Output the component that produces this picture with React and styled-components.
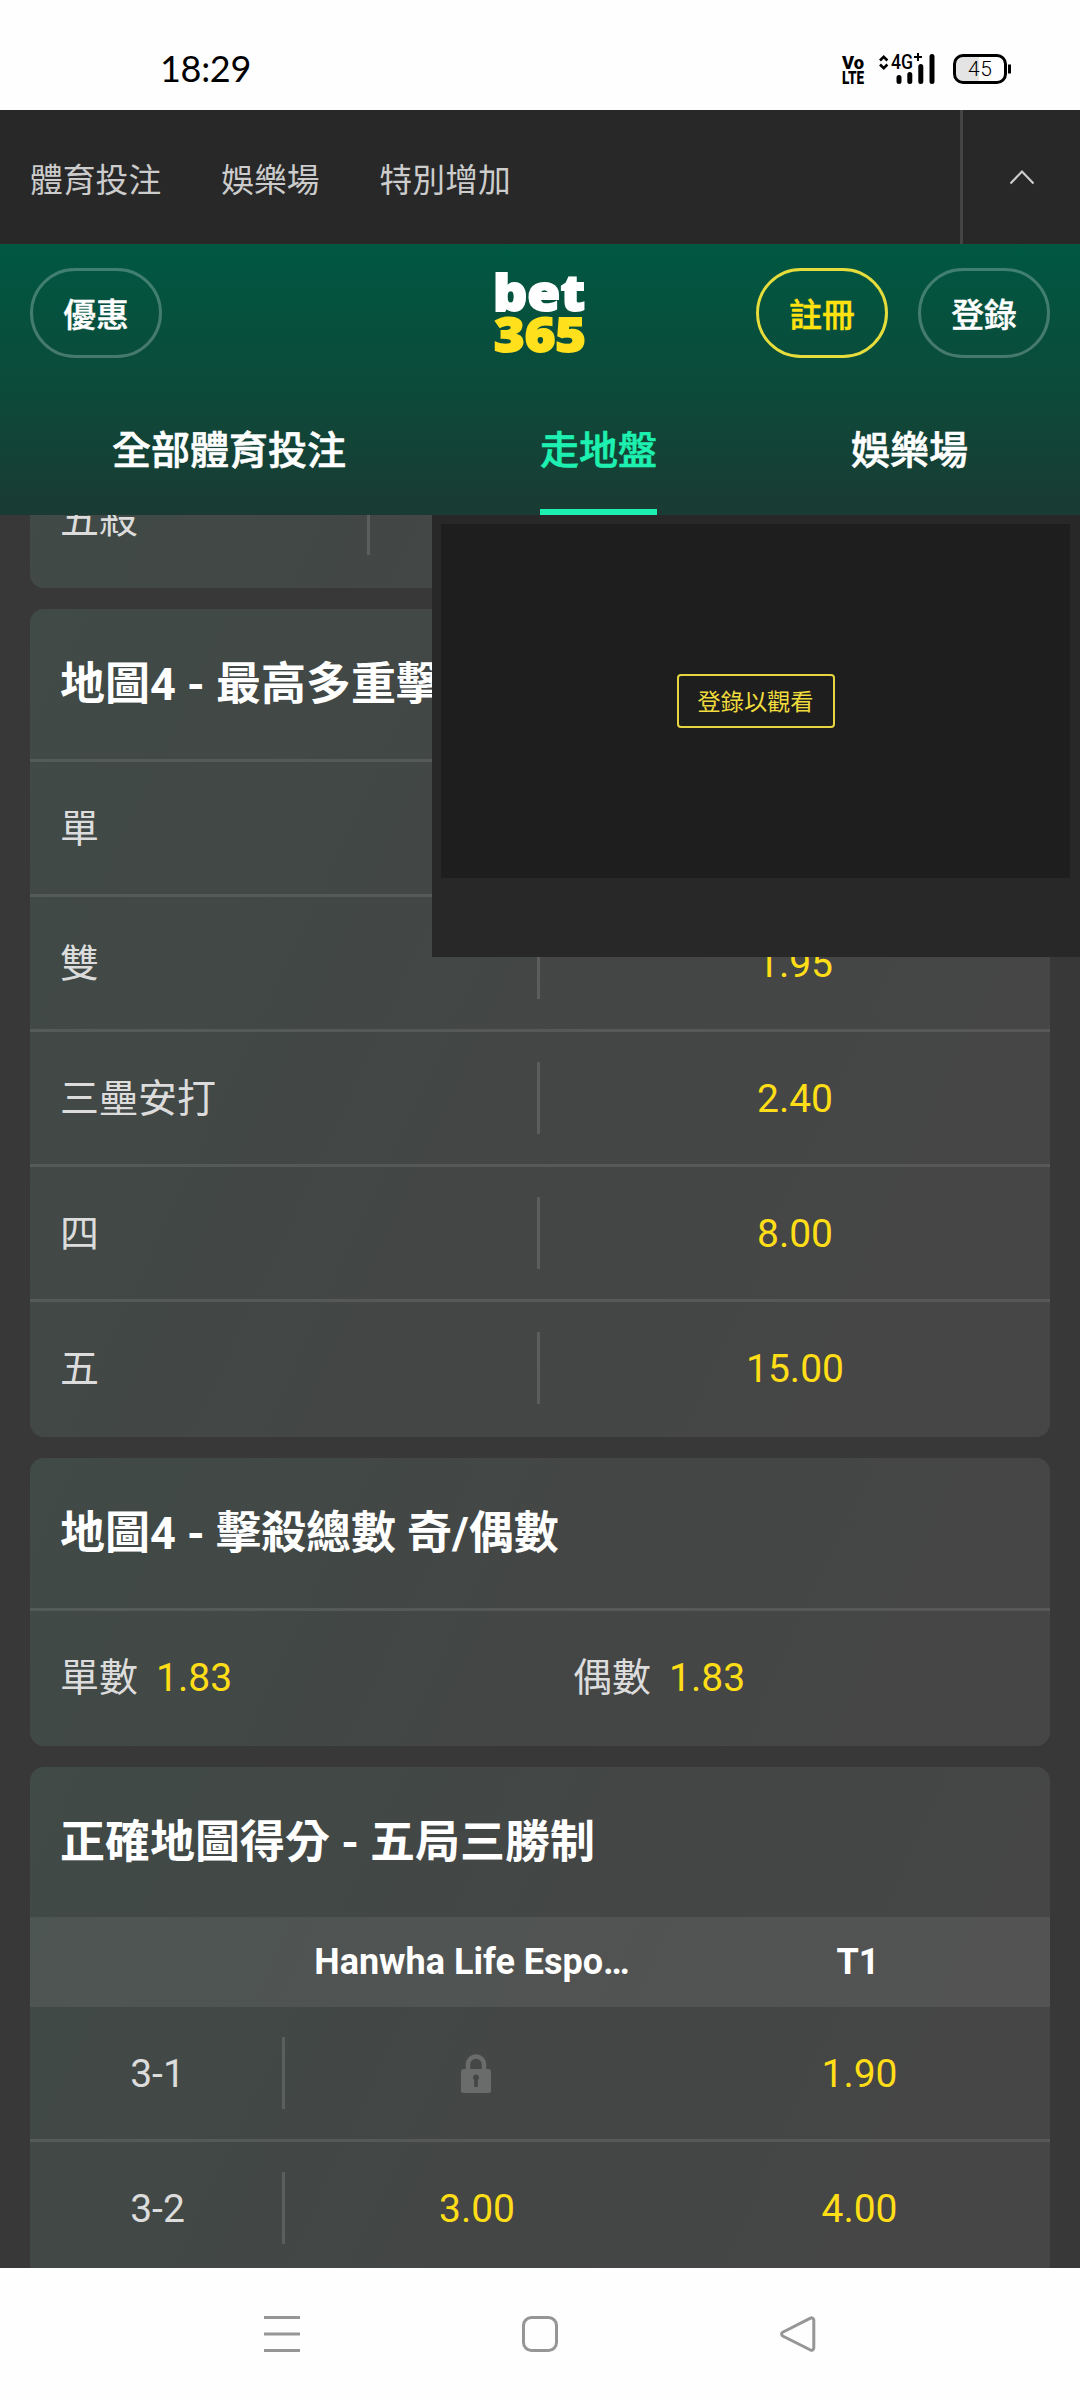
import React from "react";
import styled, { createGlobalStyle } from "styled-components";

const GlobalStyle = createGlobalStyle`
  * {
    box-sizing: border-box;
  }

  body {
    margin: 0;
    background: #383838;
    font-family: Roboto, "Noto Sans CJK TC", sans-serif;
  }
`;

const Screen = styled.div`
  width: 1080px;
  height: 2400px;
  display: flex;
  flex-direction: column;
  overflow: hidden;
`;

// STATUS BAR
const StatusBar = styled.div`
  flex: none;
  height: 110px;
  padding: 26px 66px 0 160px;
  display: flex;
  justify-content: space-between;
  background: #fefefe;
`;

const Clock = styled.div`
  font-family: Lato, sans-serif;
  font-size: 36px;
  line-height: 84px;
  height: 84px;
  letter-spacing: -0.3px;
  color: #000;
`;

const StatusIcons = styled.svg`
  width: 174px;
  height: 40px;
  margin-top: 23px;
  font-family: Roboto, sans-serif;
`;

// PRODUCT BAR
const ProductBar = styled.div`
  flex: none;
  height: 134px;
  display: flex;
  background: #282828;
`;

const Products = styled.div`
  flex: 1;
  padding: 0 30px;
  display: flex;
  align-items: center;
  gap: 60px;
`;

const Product = styled.span`
  font-size: 32.8px;
  color: #ccc;
`;

const CollapseButton = styled.div`
  width: 120px;
  display: flex;
  align-items: center;
  justify-content: center;
  border-left: 3px solid #444;
`;

// HEADER
const Header = styled.header`
  flex: none;
  height: 271px;
  display: flex;
  flex-direction: column;
  background: linear-gradient(180deg, #005842 0%, #0b4b3a 50%, #1a3b33 100%);
`;

const HeaderTop = styled.div`
  height: 138px;
  padding: 0 30px;
  display: grid;
  grid-template-columns: 1fr auto 1fr;
  align-items: center;
`;

const Logo = styled.svg`
  width: 100px;
  height: 116px;
  font-family: "Open Sans", "Noto Sans", sans-serif;
  font-weight: 800;
`;

const Actions = styled.div`
  display: flex;
  justify-content: ${(props) => props.$align};
  gap: 30px;
`;

const Pill = styled.div`
  width: 132px;
  height: 90px;
  display: flex;
  align-items: center;
  justify-content: center;
  padding-bottom: 1px;
  border: 3px solid
    ${(props) => (props.$primary ? "#e6dd3c" : "rgba(255, 255, 255, 0.25)")};
  border-radius: 45px;
  color: ${(props) => (props.$primary ? "#ffe210" : "#fff")};
  font-size: 32.8px;
  font-weight: 500;
  -webkit-text-stroke: 0.4px currentColor;
`;

const Tabs = styled.nav`
  flex: 1;
  padding: 0 15px;
  display: flex;
  justify-content: space-around;
`;

const Tab = styled.div`
  display: flex;
  align-items: center;
  padding-top: ${(props) => (props.$active ? "2px" : "0")};
  padding-bottom: ${(props) => (props.$active ? "0" : "4px")};
  border-bottom: ${(props) => (props.$active ? "6px solid #1df0b0" : "none")};
  color: ${(props) => (props.$active ? "#1df0b0" : "#fff")};
  font-size: 39px;
  font-weight: 500;
  -webkit-text-stroke: 0.6px currentColor;
`;

// MARKETS
const Content = styled.main`
  flex: 1;
  min-height: 0;
  position: relative;
  overflow: hidden;
  padding: 0 30px;
  background: #383838;
`;

// The list is scrolled so that the first card is half under the header
const MarketList = styled.div`
  margin-top: -65px;
  display: flex;
  flex-direction: column;
  gap: 21px;
`;

const Card = styled.section`
  border-radius: 14px;
  padding-bottom: 3px;
  background: linear-gradient(115deg, #404a46 0%, #444645 55%, #464646 100%);
`;

const CardTitle = styled.h2`
  margin: 0;
  height: 150px;
  padding: 0 30px 7px;
  display: flex;
  align-items: center;
  font-size: 45px;
  font-weight: 700;
  white-space: pre;
  color: #fff;
`;

const Row = styled.div`
  height: ${(props) => (props.$plain ? "132px" : "135px")};
  display: grid;
  grid-template-columns: ${(props) => props.$columns};
  align-items: center;
  border-top: ${(props) =>
    props.$plain ? "none" : "3px solid rgba(255, 255, 255, 0.1)"};
`;

const Label = styled.div`
  height: 72px;
  padding: ${(props) => (props.$center ? "1px 0 0 3px" : "0 0 6px 30px")};
  display: flex;
  align-items: center;
  justify-content: ${(props) => (props.$center ? "center" : "flex-start")};
  border-right: 3px solid rgba(255, 255, 255, 0.13);
  font-size: 39px;
  color: #dcdcdc;
`;

const Odds = styled.div`
  display: flex;
  justify-content: center;
  padding-top: 1px;
  font-size: 39px;
  color: #ffde18;
`;

const Selection = styled.div`
  display: flex;
  align-items: center;
  gap: 18px;
  padding-left: 30px;
`;

const SelectionName = styled.span`
  padding-bottom: 6px;
  font-size: 39px;
  color: #dcdcdc;
`;

const TeamHeader = styled.div`
  height: 90px;
  display: grid;
  grid-template-columns: 255px 384px 381px;
  align-items: center;
  background: rgba(255, 255, 255, 0.07);
`;

const Team = styled.div`
  padding-right: ${(props) => (props.$wide ? "10px" : "3px")};
  text-align: center;
  font-size: 36px;
  font-weight: 700;
  color: #fff;
`;

// STREAM OVERLAY
const Stream = styled.aside`
  position: absolute;
  top: 0;
  right: 0;
  width: 648px;
  height: 442px;
  padding: 9px 10px 79px 9px;
  display: flex;
  background: #282828;
`;

const StreamScreen = styled.div`
  flex: 1;
  display: flex;
  align-items: center;
  justify-content: center;
  background: #1e1e1e;
`;

const WatchButton = styled.div`
  width: 158px;
  height: 54px;
  padding-bottom: 3px;
  display: flex;
  align-items: center;
  justify-content: center;
  border: 2px solid #e6d53f;
  border-radius: 4px;
  font-size: 23.2px;
  color: #f0dc3c;
`;

// SYSTEM NAVIGATION
const SystemNav = styled.div`
  flex: none;
  height: 132px;
  padding: 0 264px;
  display: flex;
  align-items: center;
  justify-content: space-between;
  background: #fefefe;
`;

const NavIcon = styled.svg`
  width: 36px;
  height: 36px;
  fill: none;
  stroke: #969696;
  stroke-width: 3;
`;

const kills = [
  { name: "單", odds: "1.95" },
  { name: "雙", odds: "1.95" },
  { name: "三壘安打", odds: "2.40" },
  { name: "四", odds: "8.00" },
  { name: "五", odds: "15.00" },
];

const scores = [
  { name: "3-1", home: null, away: "1.90" },
  { name: "3-2", home: "3.00", away: "4.00" },
];

const Lock = () => (
  <svg width="34" height="40" viewBox="0 0 34 40">
    <path
      d="M8 17V10.500a8 8 0 0 1 16 0V17"
      fill="none"
      stroke="#6a6c6b"
      strokeWidth="4.500"
    />
    <path
      fillRule="evenodd"
      fill="#6a6c6b"
      d="M3.500 15h25a2.500 2.500 0 0 1 2.500 2.500v19a2.500 2.500 0 0 1-2.500 2.500H3.500a2.500 2.500 0 0 1-2.500-2.500v-19A2.500 2.500 0 0 1 3.500 15zM16 20.500a3 3 0 0 0-1.800 5.400V33h3.600v-7.100a3 3 0 0 0-1.800-5.400z"
    />
  </svg>
);

export default () => (
  <React.Fragment>
    <GlobalStyle />
    <Screen>
      <StatusBar>
        <Clock>18:29</Clock>
        <StatusIcons viewBox="840 49 174 40">
          <g fontWeight="900" fontSize="18.500">
            <text x="842" y="69" textLength="22" lengthAdjust="spacingAndGlyphs">
              Vo
            </text>
            <text x="842" y="84" textLength="22" lengthAdjust="spacingAndGlyphs">
              LTE
            </text>
          </g>
          <path
            d="M880 60.500l3.700-3.700 3.700 3.700M880 64.500l3.700 3.700 3.700-3.700"
            fill="none"
            stroke="#000"
            strokeWidth="2.600"
          />
          <text
            x="891"
            y="69"
            fontSize="20"
            fontWeight="500"
            textLength="22"
            lengthAdjust="spacingAndGlyphs"
          >
            4G
          </text>
          <path d="M914 57h8M918 53v8" stroke="#000" strokeWidth="2" />
          <path
            d="M899 77.500v4M909.800 74.500v7M920.800 66.500v15M932 56.500v25"
            stroke="#000"
            strokeWidth="5"
            strokeLinecap="round"
          />
          <path d="M964 56h15v26h-15a8 8 0 0 1-8-8v-10a8 8 0 0 1 8-8z" fill="#e4e4e4" />
          <rect
            x="954.500"
            y="55.500"
            width="51"
            height="27"
            rx="8.500"
            fill="none"
            stroke="#000"
            strokeWidth="3"
          />
          <path d="M1009.500 64.500v9" stroke="#000" strokeWidth="3" />
          <text x="968" y="76" fontSize="21" fontWeight="300" textLength="24">
            45
          </text>
        </StatusIcons>
      </StatusBar>

      <ProductBar>
        <Products>
          <Product>體育投注</Product>
          <Product>娛樂場</Product>
          <Product>特別增加</Product>
        </Products>
        <CollapseButton>
          <svg width="26" height="16" viewBox="0 0 26 16">
            <path
              d="M1.500 14.500L13 2.500l11.500 12"
              fill="none"
              stroke="#ccc"
              strokeWidth="2.200"
            />
          </svg>
        </CollapseButton>
      </ProductBar>

      <Header>
        <HeaderTop>
          <Actions $align="flex-start">
            <Pill>優惠</Pill>
          </Actions>
          <Logo viewBox="-5 -16 100 116">
            <text
              x="-2"
              y="39.500"
              fontSize="50"
              fill="#fff"
              stroke="#fff"
              strokeWidth="1.800"
              textLength="92"
              lengthAdjust="spacingAndGlyphs"
            >
              bet
            </text>
            <text
              x="-1"
              y="81"
              fontSize="48"
              fill="#ffe01c"
              stroke="#ffe01c"
              strokeWidth="1.800"
              textLength="92"
              lengthAdjust="spacingAndGlyphs"
            >
              365
            </text>
          </Logo>
          <Actions $align="flex-end">
            <Pill $primary>註冊</Pill>
            <Pill>登錄</Pill>
          </Actions>
        </HeaderTop>
        <Tabs>
          <Tab>全部體育投注</Tab>
          <Tab $active>走地盤</Tab>
          <Tab>娛樂場</Tab>
        </Tabs>
      </Header>

      <Content>
        <MarketList>
          <Card>
            <Row $columns="1fr 1fr 1fr">
              <Label>五殺</Label>
            </Row>
          </Card>

          <Card>
            <CardTitle>地圖4 - 最高多重擊殺</CardTitle>
            {kills.map((kill) => (
              <Row key={kill.name} $columns="1fr 1fr">
                <Label>{kill.name}</Label>
                <Odds>{kill.odds}</Odds>
              </Row>
            ))}
          </Card>

          <Card>
            <CardTitle>地圖4 - 擊殺總數 奇/偶數</CardTitle>
            <Row $columns="513px 1fr">
              <Selection>
                <SelectionName>單數</SelectionName>
                <Odds>1.83</Odds>
              </Selection>
              <Selection>
                <SelectionName>偶數</SelectionName>
                <Odds>1.83</Odds>
              </Selection>
            </Row>
          </Card>

          <Card>
            <CardTitle>正確地圖得分 - 五局三勝制</CardTitle>
            <TeamHeader>
              <div />
              <Team $wide>Hanwha Life Espo…</Team>
              <Team>T1</Team>
            </TeamHeader>
            {scores.map((score, inx) => (
              <Row
                key={score.name}
                $columns="255px 384px 381px"
                $plain={inx === 0}
              >
                <Label $center>{score.name}</Label>
                <Odds>{score.home || <Lock />}</Odds>
                <Odds>{score.away}</Odds>
              </Row>
            ))}
          </Card>
        </MarketList>

        <Stream>
          <StreamScreen>
            <WatchButton>登錄以觀看</WatchButton>
          </StreamScreen>
        </Stream>
      </Content>

      <SystemNav>
        <NavIcon viewBox="0 0 36 36">
          <path d="M0 1.500h36M0 18h36M0 34.500h36" />
        </NavIcon>
        <NavIcon viewBox="0 0 36 36">
          <rect x="1.500" y="1.500" width="33" height="33" rx="8" />
        </NavIcon>
        <NavIcon viewBox="0 0 36 36">
          <path d="M30.500 2.200L2.700 16.200a2.200 2.200 0 0 0 0 3.800L30.500 34a2.200 2.200 0 0 0 3.300-1.900V4.100a2.200 2.200 0 0 0-3.300-1.900z" />
        </NavIcon>
      </SystemNav>
    </Screen>
  </React.Fragment>
);
